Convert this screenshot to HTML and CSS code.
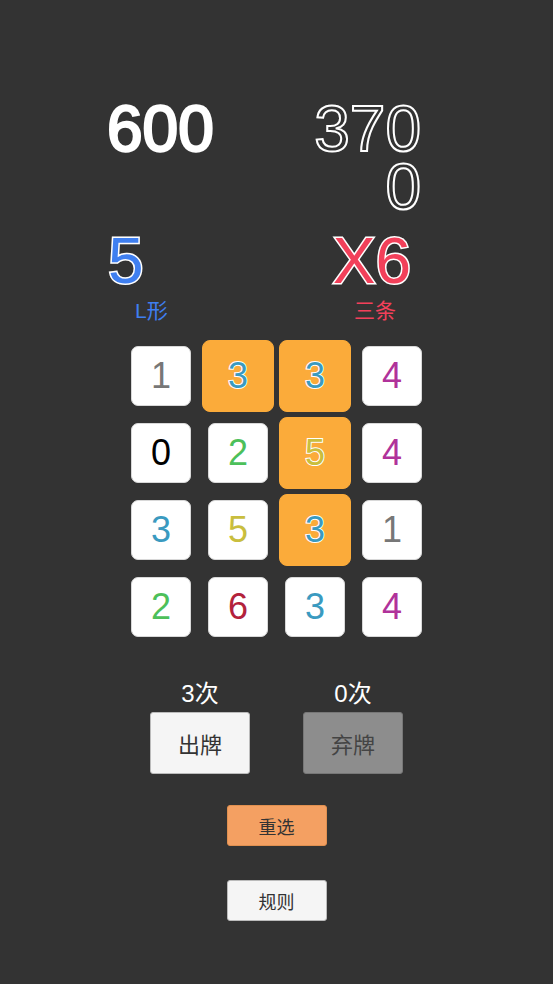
FILE: index.html
```html
<!DOCTYPE html>
<html lang="zh-CN">
<head>
    <meta charset="UTF-8">
    <meta name="viewport" content="width=device-width, initial-scale=1.0">
    <title>数字牌</title>
    <link rel="stylesheet" href="styles.css">
</head>
<body>
    <div class="top">
        <div class="row scores">
            <div class="score">600</div>
            <div class="target">3700</div>
        </div>
        <div class="row combo">
            <div class="chips">5</div>
            <div class="mult">X6</div>
        </div>
        <div class="row labels">
            <div class="shape">L形</div>
            <div class="kind">三条</div>
        </div>
    </div>

    <div class="board">
        <div class="tile c-gray">1</div>
        <div class="tile picked c-blue">3</div>
        <div class="tile picked c-blue">3</div>
        <div class="tile c-purple">4</div>
        <div class="tile c-black">0</div>
        <div class="tile c-green">2</div>
        <div class="tile picked c-yellow">5</div>
        <div class="tile c-purple">4</div>
        <div class="tile c-blue">3</div>
        <div class="tile c-yellow">5</div>
        <div class="tile picked c-blue">3</div>
        <div class="tile c-gray">1</div>
        <div class="tile c-green">2</div>
        <div class="tile c-red">6</div>
        <div class="tile c-blue">3</div>
        <div class="tile c-purple">4</div>
    </div>

    <div class="actions">
        <div class="action">
            <div class="count">3次</div>
            <button class="btn play">出牌</button>
        </div>
        <div class="action">
            <div class="count">0次</div>
            <button class="btn discard">弃牌</button>
        </div>
    </div>

    <div class="extra">
        <button class="btn small reset">重选</button>
        <button class="btn small rules">规则</button>
    </div>
</body>
</html>
```

FILE: styles.css
```css
body {
    margin: 0;
    background-color: #333333;
    font-family: "Liberation Sans", "Noto Sans CJK SC", sans-serif;
    color: white;
}
.top {
    width: 319px;
    margin-left: 104px;
    padding-top: 100px;
}
.row {
    display: flex;
    justify-content: space-between;
}
.scores, .combo {
    font-size: 64px;
    line-height: 58px;
}
.score {
    margin-left: 3px;
    color: white;
    -webkit-text-stroke: 2.5px white;
}
.target {
    width: 122px;
    margin-right: 2px;
    text-align: right;
    word-break: break-all;
    color: transparent;
    -webkit-text-stroke: 2px white;
}
.combo {
    margin-top: 16px;
}
.chips, .mult {
    -webkit-text-stroke: 3px white;
    paint-order: stroke fill;
}
.chips {
    margin-left: 4px;
    color: #3f7ff0;
}
.mult {
    margin-right: 12px;
    color: #f2405a;
}
.labels {
    margin-top: 9px;
    font-size: 21px;
    line-height: 24px;
}
.shape {
    margin-left: 31px;
    color: #3f7ff0;
}
.kind {
    margin-right: 27px;
    color: #f2405a;
}
.board {
    display: grid;
    grid-template-columns: repeat(4, 60px);
    grid-auto-rows: 60px;
    gap: 17px;
    width: 291px;
    margin: 23px 0 0 131px;
}
.tile {
    display: flex;
    align-items: center;
    justify-content: center;
    background: white;
    border: 1px solid #d8d8d8;
    border-radius: 7px;
    box-sizing: border-box;
    font-size: 36px;
}
.tile.picked {
    margin: -6px;
    background: #fbab3a;
    border-color: #fbab3a;
    border-radius: 8px;
    -webkit-text-stroke: 2px white;
    paint-order: stroke fill;
}
.c-gray { color: #777777; }
.c-blue { color: #3a9ac0; }
.c-purple { color: #b0329a; }
.c-black { color: #000000; }
.c-green { color: #4cc05a; }
.c-yellow { color: #c9be3e; }
.c-red { color: #b3223c; }
.actions {
    display: flex;
    justify-content: center;
    gap: 53px;
    margin-top: 43px;
}
.action {
    display: flex;
    flex-direction: column;
    align-items: center;
    gap: 4px;
}
.count {
    font-size: 24px;
    line-height: 28px;
}
.btn {
    font-family: "Noto Sans CJK SC", sans-serif;
    border: 1px solid #bbbbbb;
    border-radius: 3px;
    color: #333333;
    padding: 0;
}
.play, .discard {
    width: 100px;
    height: 62px;
    font-size: 22px;
}
.play {
    background: #f5f5f5;
}
.discard {
    background: #8d8d8d;
    border-color: #777777;
    color: #444444;
}
.extra {
    display: flex;
    flex-direction: column;
    align-items: center;
    gap: 34px;
    margin-top: 31px;
}
.small {
    width: 100px;
    height: 41px;
    font-size: 18px;
}
.reset {
    background: #f4a062;
    border-color: #e09050;
}
.rules {
    background: #f5f5f5;
}
```
